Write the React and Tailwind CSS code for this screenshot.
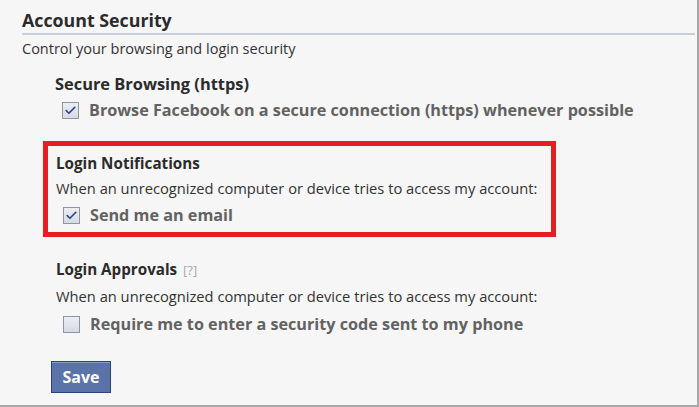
import { Check } from 'lucide-react';

const Checkbox = ({ checked }) => (
  <span className="w-[17px] h-[17px] shrink-0 border border-[#8d95a6] bg-gradient-to-b from-[#eceef2] to-[#d6dae3] flex items-center justify-center">
    {checked && <Check className="w-[13px] h-[13px] text-[#2a3d8f]" strokeWidth={3} />}
  </span>
);

const Option = ({ checked, children }) => (
  <div className="flex items-center gap-[10px] pl-[7px]">
    <Checkbox checked={checked} />
    <span className="font-bold text-[16.2px] leading-[20px] text-[#626262]">{children}</span>
  </div>
);

const App = () => {
  return (
    <div
      className="w-[699px] h-[407px] bg-[#f6f6f6] border-r-2 border-b-2 border-[#a8a8a8] text-[#333] overflow-hidden"
      style={{ fontFamily: '"Open Sans", "Noto Sans", sans-serif' }}
    >
      {/* Header */}
      <div className="pl-[22px] pr-[2px] pt-[8px]">
        <h1 className="text-[17.8px] font-bold leading-[24px] pb-[1px] border-b-2 border-[#c9cddd] text-[#2b2b2b]">
          Account Security
        </h1>
        <p className="text-[14.5px] leading-[20px] mt-[4px]">Control your browsing and login security</p>
      </div>

      {/* Secure Browsing */}
      <div className="pl-[55px] mt-[14px]">
        <h2 className="text-[16.4px] font-bold leading-[22px] text-[#2b2b2b]">Secure Browsing (https)</h2>
        <div className="mt-[5px]">
          <Option checked>Browse Facebook on a secure connection (https) whenever possible</Option>
        </div>
      </div>

      {/* Login Notifications */}
      <div className="ml-[43px] mt-[21px] w-[513px] h-[96px] border-[5px] border-[#e31e24] pl-[8px] pt-[7px]">
        <h2 className="text-[15.2px] font-bold leading-[20px] text-[#2b2b2b]">Login Notifications</h2>
        <p className="text-[14.7px] leading-[20px] mt-[5px]">When an unrecognized computer or device tries to access my account:</p>
        <div className="mt-[7px]">
          <Option checked>Send me an email</Option>
        </div>
      </div>

      {/* Login Approvals */}
      <div className="pl-[56px] mt-[22px]">
        <h2 className="text-[15.2px] font-bold leading-[20px] text-[#2b2b2b]">
          Login Approvals <span className="font-normal text-[13px] text-[#aaa] ml-[2px]">[?]</span>
        </h2>
        <p className="text-[14.7px] leading-[20px] mt-[6px]">When an unrecognized computer or device tries to access my account:</p>
        <div className="mt-[8px]">
          <Option>Require me to enter a security code sent to my phone</Option>
        </div>
      </div>

      {/* Save */}
      <div className="pl-[51px] mt-[27px]">
        <button className="w-[60px] h-[32px] bg-[#5b74a8] border border-[#29447e] text-white font-bold text-[16px] shadow-[inset_0_1px_0_#8a9cc2]">
          Save
        </button>
      </div>
    </div>
  );
};

export default App;
